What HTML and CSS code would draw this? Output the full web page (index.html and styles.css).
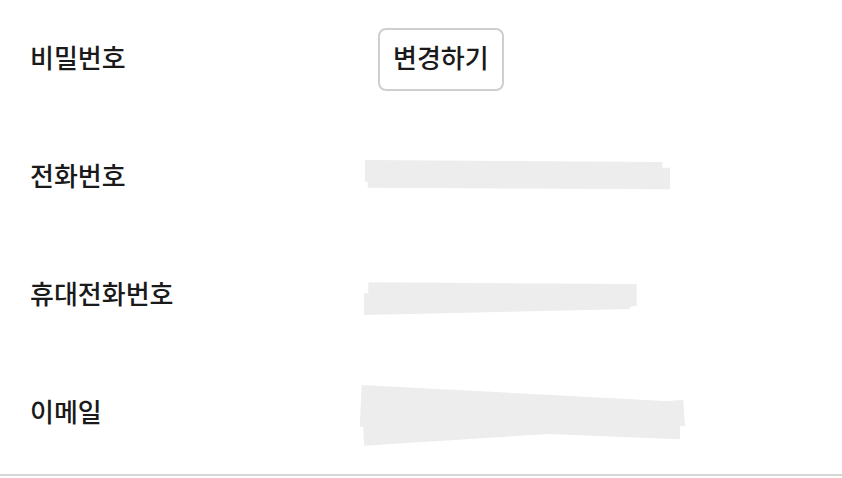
FILE: index.html
```html
<!DOCTYPE html>
<html lang="ko">
<head>
    <meta charset="UTF-8">
    <meta name="viewport" content="width=device-width, initial-scale=1.0">
    <title>회원정보</title>
    <link rel="stylesheet" href="styles.css">
</head>
<body>
    <!-- Account Info -->
    <div class="info-list">
        <div class="info-row">
            <div class="info-label">비밀번호</div>
            <div class="info-value">
                <button type="button" class="btn-change">변경하기</button>
            </div>
        </div>

        <div class="info-row">
            <div class="info-label">전화번호</div>
            <div class="info-value">
                <svg class="redact" width="330" height="118" viewBox="358 118 330 118">
                    <polygon points="365,160 662.3,162 662.3,167.7 670,167.7 670,189.3 367.7,187.7 367.7,181.7 365,181.7" />
                </svg>
            </div>
        </div>

        <div class="info-row">
            <div class="info-label">휴대전화번호</div>
            <div class="info-value">
                <svg class="redact" width="330" height="118" viewBox="358 236 330 118">
                    <polygon points="368.3,282.3 636.7,284 636.7,305.7 630,306.7 630,309 364,315 364,293.3 368.3,293.3" />
                </svg>
            </div>
        </div>

        <div class="info-row">
            <div class="info-label">이메일</div>
            <div class="info-value">
                <svg class="redact" width="330" height="118" viewBox="358 354 330 118">
                    <polygon points="361.7,385 665,401 683.3,400 685,425.7 680,426 680,439.3 548.3,434 364,445.7 363.3,426.7 359.7,426.7" />
                </svg>
            </div>
        </div>
    </div>
</body>
</html>
```

FILE: styles.css
```css
/* Reset */
* {
    margin: 0;
    padding: 0;
    box-sizing: border-box;
}

body {
    font-family: 'Noto Sans CJK KR', 'Noto Sans', sans-serif;
    background: #fff;
    color: #1a1a1a;
}

/* Info list */
.info-list {
    padding-bottom: 2px;
    border-bottom: 2px solid #d6d6d6;
}

.info-row {
    display: flex;
    align-items: center;
    height: 118px;
}

.info-label {
    width: 358px;
    padding-left: 30px;
    padding-bottom: 6px;
    font-size: 26px;
    font-weight: 500;
}

.info-value {
    display: flex;
    align-items: center;
    height: 100%;
}

.btn-change {
    margin-left: 20px;
    height: 63px;
    padding: 0 13px 5px;
    background: #fff;
    border: 2px solid #cfcfcf;
    border-radius: 8px;
    font-family: inherit;
    font-size: 26px;
    font-weight: 500;
    color: #1a1a1a;
    cursor: pointer;
}

.redact {
    display: block;
    fill: #ededed;
}
```
